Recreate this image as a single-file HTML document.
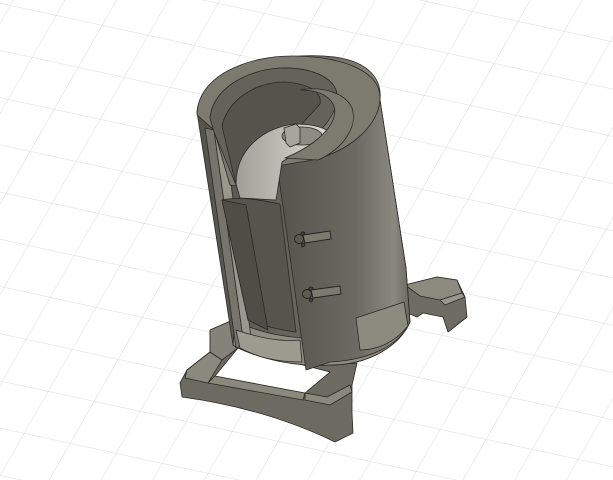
<!DOCTYPE html><html><head><style>html,body{margin:0;padding:0;background:#fff;width:613px;height:480px;overflow:hidden}</style></head><body>
<svg width="613" height="480" viewBox="0 0 613 480" xmlns="http://www.w3.org/2000/svg">
<defs>
<pattern id="g" patternUnits="userSpaceOnUse" width="1" height="1" patternTransform="matrix(46 10 -24 42 10 5)">
<path d="M0 0H1M0 0V1" stroke="#e0e0e0" stroke-width="0.025" fill="none"/>
</pattern>
<linearGradient id="body" x1="0" x2="1"><stop offset="0" stop-color="#55534b"/><stop offset="0.6" stop-color="#6c6a62"/><stop offset="0.88" stop-color="#8a887f"/><stop offset="1" stop-color="#6a685f"/></linearGradient>
<linearGradient id="inner" x1="0" x2="1"><stop offset="0" stop-color="#a19e95"/><stop offset="1" stop-color="#e0ddd5"/></linearGradient>
</defs>
<rect width="613" height="480" fill="#fff"/>
<rect width="613" height="480" fill="url(#g)"/>
<g stroke="#2a2925" stroke-width="0.8" stroke-linejoin="round">
<path d="M405 285 L437 277 L457 280 L465 297 L467 317 L448 332 L443 317 L423 313 L417 317 L405 312Z" fill="#6f6c63"/>
<path d="M405 285 L437 277 L457 280 L462 293 L440 300 L420 296Z" fill="#8c897f"/>
<path d="M440 300 L462 293 L465 297 L445 305Z" fill="#9a978d"/>
<path d="M187 370 L210 352 L210 330 L233 320 L240 340 L330 365 L357 363 L352 385 L352 413 L353 433 L335 442 C290 420 240 405 182 397 L180 383Z" fill="#6d6a61"/>
<path d="M187 370 L210 352 L222 360 L208 383 L185 378Z" fill="#8b887e"/>
<path d="M210 352 L210 330 L233 320 L238 348 L222 360Z" fill="#85827a"/>
<path d="M305 393 L327 397 L350 385 L352 392 L330 405 L305 400Z" fill="#8b887e"/>
<path d="M208 383 L303 400 L305 393 L215 376Z" fill="#8b887e"/>
<path d="M238 348 L330 372 L305 393 L215 376Z" fill="#fff"/>
<path d="M197 112 C200 70 280 50 335 57 C370 62 382 80 380 100 L406 268 L410 322 C400 345 370 365 330 365 C280 368 240 350 233 345 Z" fill="url(#body)"/>
<path d="M235 320 C260 335 300 340 330 338 L356 322 L405 300 L410 322 C400 345 370 365 330 365 C280 368 240 350 233 345Z" fill="#8f8c82"/>
<path d="M205 128 L214 130 L244 345 L236 348 Z" fill="#77746b"/>
<path d="M214 130 L224 130 L252 345 L244 345Z" fill="#9a978d"/>
<path d="M222 200 C240 196 260 200 280 204 L296 332 C280 330 260 325 248 320Z" fill="#56544c"/>
<path d="M222 200 L246 205 L268 330 L248 320Z" fill="#4f4d46"/>
<path d="M236 330 C260 338 280 342 300 340 L302 362 C280 362 258 358 240 348Z" fill="#9d9a90"/>
<path d="M277 164 C310 160 350 150 378 110 L380 100 L406 268 L410 322 C400 345 370 360 330 362 L306 370 Z" fill="url(#body)"/>
<path d="M356 318 L404 302 L408 326 C395 342 378 350 360 350Z" fill="#8d8a80"/>
<!-- top rim ring -->
<path d="M197 115 C197 75 250 55 295 56 C345 57 382 72 380 100 C378 130 340 158 300 162 L277 166 L262 190 L230 185 L214 130Z" fill="#7d7a70"/>
<path d="M210 118 C212 90 245 70 280 68 C315 67 340 80 337 100 C334 120 315 140 290 150 L272 158 L262 190 L236 185 L214 132Z" fill="#65625a"/>
<path d="M222 126 C228 100 255 82 285 82 C310 84 322 92 320 104 L300 126 L272 150 L262 190 L236 185 Z" fill="#55534b"/>
<path d="M236 184 C236 150 262 128 295 124 C318 124 332 130 333 138 C316 148 296 152 282 162 L276 200 L240 198Z" fill="url(#inner)"/>
<ellipse cx="302" cy="136" rx="20" ry="9" fill="#8f8c83"/>
<path d="M284 128 L296 124 L300 128 L300 143 L290 147 L286 143Z" fill="#a8a59c"/>
<path d="M300 90 C325 90 340 102 333 120 C326 136 305 150 285 158 L318 160 C345 148 358 125 352 108 C345 92 320 86 300 90Z" fill="#7d7a70"/>
</g>
<g stroke="#222" stroke-width="0.9" fill="#7c796f">
<circle cx="299" cy="239" r="4.5" fill="none"/><circle cx="303" cy="234" r="2" fill="#444"/><path d="M303 235 L330 231 L331 239 L305 243Z"/><circle cx="303" cy="245" r="1.8" fill="#444"/>
<circle cx="307" cy="294" r="4.5" fill="none"/><circle cx="311" cy="289" r="2" fill="#444"/><path d="M311 290 L340 286 L341 294 L313 298Z"/><circle cx="311" cy="300" r="1.8" fill="#444"/>
</g>
</svg>
</body></html>
